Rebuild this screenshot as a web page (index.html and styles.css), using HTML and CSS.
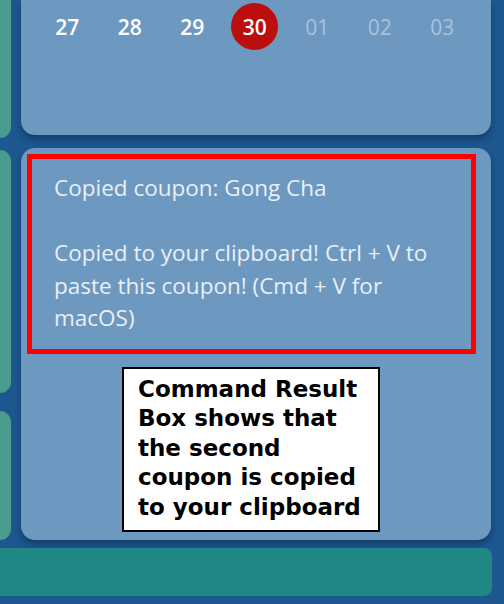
FILE: index.html
```html
<!DOCTYPE html>
<html>
<head>
<meta charset="utf-8">
<link rel="stylesheet" href="styles.css">
</head>
<body>
<div class="page">
  <div class="side">
    <div class="side-panel p1"></div>
    <div class="side-panel p2"></div>
    <div class="side-panel p3"></div>
  </div>
  <div class="main">
    <div class="card calendar">
      <div class="days">
        <span class="day">27</span>
        <span class="day">28</span>
        <span class="day">29</span>
        <span class="day today">30</span>
        <span class="day muted">01</span>
        <span class="day muted">02</span>
        <span class="day muted">03</span>
      </div>
    </div>
    <div class="card result">
      <div class="result-box">
        <p>Copied coupon: Gong Cha</p>
        <p class="gap">Copied to your clipboard! Ctrl + V to paste this coupon! (Cmd + V for macOS)</p>
      </div>
      <div class="note">Command Result Box shows that the second coupon is copied to your clipboard</div>
    </div>
  </div>
  <div class="bottom-bar"></div>
</div>
</body>
</html>
```
FILE: styles.css
```css
html, body {
  margin: 0;
  padding: 0;
}
body {
  background: #1c5790;
  width: 504px;
  height: 604px;
  overflow: hidden;
  font-family: "Open Sans", "Noto Sans", sans-serif;
}
.page {
  display: grid;
  grid-template-columns: 11px 470px;
  column-gap: 10px;
  row-gap: 8px;
}
.side {
  display: flex;
  flex-direction: column;
  height: 540px;
}
.side-panel {
  background: #4b9b8f;
  border-radius: 0 12px 12px 0;
}
.p1 { height: 138px; border-radius: 0 0 12px 0; }
.p2 { height: 243px; margin-top: 12px; }
.p3 { flex: 1; margin-top: 18px; }
.main {
  display: flex;
  flex-direction: column;
  height: 540px;
}
.card {
  background: #6d98c0;
  border-radius: 14px;
  box-shadow: 0 4px 6px rgba(10, 30, 60, 0.45);
}
.calendar {
  height: 135px;
  border-radius: 0 0 14px 14px;
}
.days {
  display: grid;
  grid-template-columns: repeat(7, 62.5px);
  padding: 3px 0 0 15px;
}
.day {
  justify-self: center;
  width: 47px;
  height: 47px;
  border-radius: 50%;
  display: flex;
  align-items: center;
  justify-content: center;
  color: #ffffff;
  font-size: 21px;
  font-weight: 600;
}
.day.today {
  background: #bb0f0d;
}
.day.muted {
  color: #a9c3dc;
  font-weight: 500;
}
.result {
  flex: 1;
  margin-top: 13px;
  padding: 6px 15px 0 6px;
}
.result-box {
  border: 5px solid #ff0000;
  padding: 13px 20px 14px 22px;
  color: #e9eff6;
  font-size: 22.5px;
  line-height: 32.5px;
}
.result-box p {
  margin: 0;
}
.result-box .gap {
  margin-top: 32.5px;
}
.note {
  margin: 13px 0 0 95px;
  width: 228px;
  background: #ffffff;
  border: 2px solid #000000;
  padding: 6px 12px 8px 14px;
  color: #000000;
  font-family: "DejaVu Sans", sans-serif;
  font-weight: bold;
  font-size: 23px;
  line-height: 29.5px;
}
.bottom-bar {
  grid-column: 1 / 3;
  width: 492px;
  height: 48px;
  background: #1f8784;
  border-radius: 0 8px 8px 0;
}
```
